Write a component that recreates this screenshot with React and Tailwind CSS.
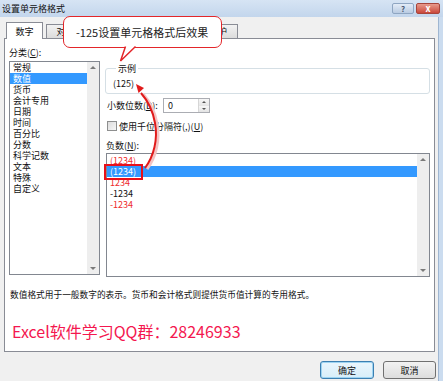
const CATEGORIES = ['常规', '数值', '货币', '会计专用', '日期', '时间', '百分比', '分数', '科学记数', '文本', '特殊', '自定义']

const NEGATIVES = [
  { text: '(1234)', red: true },
  { text: '(1234)', red: false, selected: true },
  { text: '1234', red: true },
  { text: '-1234', red: false },
  { text: '-1234', red: true },
]

const TABS = ['对齐', '字体', '边框', '填充', '保护']

function ScrollBar() {
  return (
    <div className="flex w-[12px] shrink-0 flex-col items-center justify-between bg-[#eeeeee] py-[4px]">
      <span className="h-0 w-0 border-x-[3px] border-b-[3px] border-x-transparent border-b-[#7a7a7a]" />
      <span className="h-0 w-0 border-x-[3px] border-t-[3px] border-x-transparent border-t-[#7a7a7a]" />
    </div>
  )
}

export default function App() {
  return (
    <div className="relative flex h-[381px] w-[443px] flex-col overflow-hidden bg-[#f0f0f0] text-[9px] leading-[11px] text-[#111] [font-family:'Noto_Sans_CJK_SC',sans-serif]">
      {/* title bar */}
      <div className="flex h-[17px] shrink-0 items-center bg-gradient-to-b from-[#d6e4f4] to-[#c3d6ec]">
        <span className="pl-[2px] text-[9px]">设置单元格格式</span>
        <div className="ml-auto flex gap-[2px] pr-[3px]">
          <div className="flex h-[11px] w-[22px] items-center justify-center rounded-[2px] border border-[#8fa6c2] bg-gradient-to-b from-[#e3ecf7] to-[#b9cbe2] text-[8px] font-bold leading-none text-[#4a5b73]">?</div>
          <div className="flex h-[11px] w-[24px] items-center justify-center rounded-[2px] border border-[#a7453b] bg-gradient-to-b from-[#e79a8c] to-[#c9463a] text-[9px] font-bold leading-none text-white">x</div>
        </div>
      </div>

      <div className="flex flex-1">
        {/* main dialog body */}
        <div className="flex flex-1 flex-col pl-[4px] pt-[5px]">
          {/* tabs */}
          <div className="relative z-10 -mb-px flex h-[17px] items-end">
            <div className="ml-[2px] flex h-[17px] w-[37px] items-center justify-center border border-b-0 border-[#898c95] bg-white">数字</div>
            <div className="ml-[4px] flex">
              {TABS.map((t, i) => (
                <div
                  key={t}
                  className={`-ml-px flex h-[15px] items-center justify-center border border-[#898c95] bg-gradient-to-b from-[#f2f2f2] to-[#dcdcdc] ${i === 4 ? 'w-[40px]' : 'w-[39px]'}`}
                >
                  {t}
                </div>
              ))}
            </div>
          </div>

          {/* panel */}
          <div className="flex h-[314px] w-[431px] flex-col border border-[#898c95] bg-white">
            <div className="flex">
              {/* category column */}
              <div className="ml-[4px] flex w-[91px] flex-col pt-[8px]">
                <span>分类(<span className="underline">C</span>):</span>
                <div className="mt-[3px] flex h-[214px] border border-[#828790]">
                  <div className="flex-1">
                    {CATEGORIES.map((c, i) => (
                      <div key={c} className={`h-[11px] pl-[3px] ${i === 1 ? 'bg-[#3399ff] text-white' : ''}`}>{c}</div>
                    ))}
                  </div>
                  <ScrollBar />
                </div>
              </div>

              {/* right column */}
              <div className="ml-[5px] flex w-[325px] flex-col pt-[24px]">
                <fieldset className="rounded-[3px] border border-[#d5dfe5] pb-[4px] pl-[7px] pt-[4px]">
                  <legend className="ml-[3px] px-[2px]">示例</legend>
                  <div>(125)</div>
                </fieldset>

                <div className="mt-[4px] flex h-[15px] items-center">
                  <span className="ml-[2px] w-[56px]">小数位数(<span className="underline">D</span>):</span>
                  <div className="flex h-[15px] w-[47px] border border-[#abadb3]">
                    <span className="flex-1 pl-[4px] leading-[13px]">0</span>
                    <div className="flex w-[11px] flex-col border-l border-[#d6d6d6]">
                      <div className="flex flex-1 items-center justify-center bg-gradient-to-b from-[#f7f7f7] to-[#e4e4e4]">
                        <span className="h-0 w-0 border-x-[2px] border-b-[2px] border-x-transparent border-b-[#555]" />
                      </div>
                      <div className="flex flex-1 items-center justify-center bg-gradient-to-b from-[#f7f7f7] to-[#e4e4e4]">
                        <span className="h-0 w-0 border-x-[2px] border-t-[2px] border-x-transparent border-t-[#555]" />
                      </div>
                    </div>
                  </div>
                </div>

                <div className="mt-[8px] flex h-[10px] items-center">
                  <span className="ml-[2px] h-[10px] w-[10px] border border-[#8e8f8f] bg-gradient-to-br from-[#dcdcdc] to-[#f6f6f6]" />
                  <span className="ml-[2px]">使用千位分隔符(,)(<span className="underline">U</span>)</span>
                </div>

                <span className="ml-[1px] mt-[9px]">负数(<span className="underline">N</span>):</span>
                <div className="ml-[1px] mt-[2px] flex h-[124px] w-[324px] border border-[#828790]">
                  <div className="flex-1 pt-[1px]">
                    {NEGATIVES.map((n, i) => (
                      <div
                        key={i}
                        className={`h-[11px] pl-[3px] ${n.selected ? 'bg-[#3399ff] text-white' : n.red ? 'text-[#ee2b2b]' : ''}`}
                      >
                        {n.text}
                      </div>
                    ))}
                  </div>
                  <ScrollBar />
                </div>
              </div>
            </div>

            <p className="ml-[5px] mt-[12px] text-[8.7px]">数值格式用于一般数字的表示。货币和会计格式则提供货币值计算的专用格式。</p>
            <p className="ml-[7px] mt-[21px] text-[16px] leading-[20px] text-[#f4174f]">Excel软件学习QQ群：28246933</p>
          </div>

          {/* buttons */}
          <div className="mt-[9px] flex justify-end gap-[9px] pr-[2px]">
            <button className="h-[18px] w-[54px] rounded-[3px] border border-[#3c7fb1] bg-gradient-to-b from-[#eaf6fd] to-[#d7eef9] text-[9px] shadow-[inset_0_0_0_1px_#9ed4f2]">确定</button>
            <button className="h-[18px] w-[53px] rounded-[3px] border border-[#707070] bg-gradient-to-b from-[#f2f2f2] to-[#dddddd] text-[9px]">取消</button>
          </div>
        </div>

        {/* right window frame */}
        <div className="w-[5px] border-l border-[#9fb6d1] bg-[#cbdcef]" />
      </div>

      {/* callout annotation */}
      <div className="absolute left-[63px] top-[16px] z-20 flex h-[32px] w-[159px] items-center rounded-[7px] border-[1.5px] border-[#e3262a] bg-white pl-[12px] text-[11px] text-[#222]">
        -125设置单元格格式后效果
      </div>
      <svg className="pointer-events-none absolute left-0 top-0 z-30" width="443" height="381">
        <path d="M125.5,46.5 L120.5,61 L135.5,46.5" fill="white" stroke="#e3262a" strokeWidth="1.5" strokeLinejoin="miter" />
        {/* curved arrow with soft shadow */}
        <path d="M145,168 C154,156 158,139 155,123 C153,111 148,101 141,93" fill="none" stroke="#f3c4c4" strokeWidth="3" transform="translate(2,1)" />
        <path d="M145,168 C154,156 158,139 155,123 C153,111 148,101 141,93" fill="none" stroke="#e11b1b" strokeWidth="2" />
        <polygon points="136,84 144,88 138.5,93" fill="#e11b1b" />
      </svg>
      {/* highlight box */}
      <div className="absolute left-[104px] top-[164px] z-30 h-[16px] w-[39px] border-2 border-[#e8101a]" />
    </div>
  )
}
